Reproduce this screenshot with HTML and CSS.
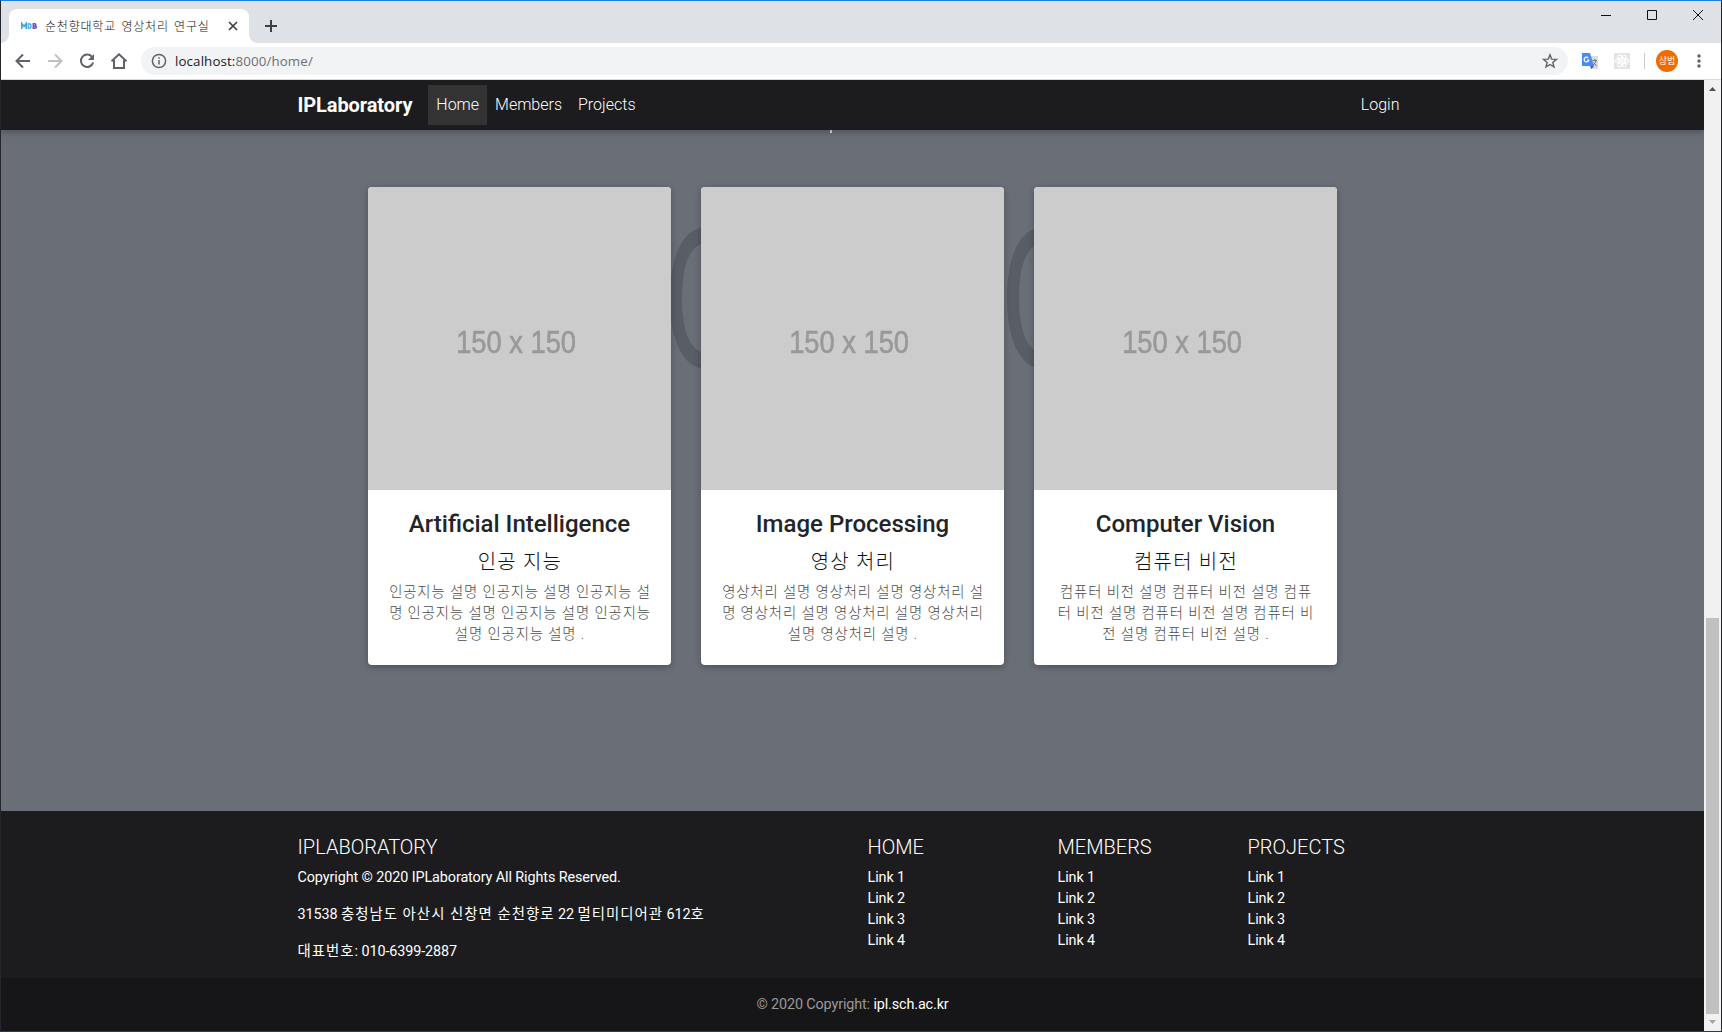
FILE: index.html
```html
<!DOCTYPE html>
<html lang="ko">
<head>
<meta charset="utf-8">
<title>순천향대학교 영상처리 연구실</title>
<link rel="stylesheet" href="styles.css">
</head>
<body>
<div class="window">
  <header class="tabstrip">
    <div class="tab">
      <svg class="favicon" width="16" height="16" viewBox="0 0 16 16" fill="none" stroke-width="1.500">
        <path d="M.8 11V5.500L3 8.500l2.200-3V11" stroke="#35a3da"/>
        <path d="M7.300 5.700h.8q1.900.2 1.900 2.300t-1.900 2.300h-.8z" stroke="#4cb8e8"/>
        <path d="M12.300 5.700h1.400q1.200.1 1.200 1.100t-1.200 1.100h-1.400h1.600q1.400.1 1.400 1.200t-1.400 1.200h-1.600z" stroke="#6a4fc0"/>
      </svg>
      <span class="tab-title">순천향대학교 영상처리 연구실</span>
      <svg class="tab-close" width="10" height="10" viewBox="0 0 10 10" stroke="#3c4043" stroke-width="1.700"><path d="M1 1l8 8M9 1L1 9"/></svg>
    </div>
    <svg class="new-tab" width="12" height="12" viewBox="0 0 12 12" stroke="#3c4043" stroke-width="2"><path d="M6 0v12M0 6h12"/></svg>
    <svg class="window-buttons" width="104" height="12" viewBox="0 0 104 12" fill="none" stroke="#111">
      <path d="M1 6.500h10M47.500 1.500h9v9h-9z"/><path d="M93 1l10 10M103 1L93 11"/>
    </svg>
  </header>
  <div class="toolbar">
    <svg class="nav-icon" width="16" height="16" viewBox="0 0 16 16" fill="none" stroke="#5f6368" stroke-width="2"><path d="M15 8H2M8 1.500L1.500 8 8 14.500"/></svg>
    <svg class="nav-icon" width="16" height="16" viewBox="0 0 16 16" fill="none" stroke="#bdc1c6" stroke-width="2"><path d="M1 8h13M8 1.500L14.500 8 8 14.500"/></svg>
    <svg class="nav-icon" width="16" height="16" viewBox="0 0 16 16" fill="none" stroke="#5f6368" stroke-width="2"><path d="M13.200 4.200A6.200 6.200 0 1 0 14.100 9.500"/><path d="M15 1v6H9z" fill="#5f6368" stroke="none"/></svg>
    <svg class="nav-icon" width="18" height="16" viewBox="0 0 18 16" fill="none" stroke="#5f6368" stroke-width="2"><path d="M1.500 8.300L9 1.300l7.500 7M4 7v8h10V7"/></svg>
    <div class="omnibox">
      <svg width="16" height="16" viewBox="0 0 16 16" fill="none" stroke="#5f6368" stroke-width="1.500"><circle cx="8" cy="8" r="6.600"/><path d="M8 7v4.500M8 4.200v1.600"/></svg>
      <span class="url"><b>localhost:</b>8000/home/</span>
      <svg class="star" width="16" height="16" viewBox="0 0 16 16" fill="none" stroke="#5f6368" stroke-width="1.400"><path d="M8 1.800l1.700 4.300 4.700.3-3.600 3 1.200 4.600-4-2.500L4 14l1.200-4.600-3.600-3 4.700-.3z"/></svg>
    </div>
    <svg class="translate" width="16" height="16" viewBox="0 0 16 16">
      <path d="M6 3h10v13H9z" fill="#dadce0"/><path d="M0 0h8l4 13H0z" fill="#4a8af4"/><path d="M8 13h4l-2.500 3z" fill="#3558c8"/>
      <path d="M6.300 4.900A2.400 2.400 0 1 0 6.900 7H4.800" fill="none" stroke="#fff" stroke-width="1.200"/>
      <path d="M10.500 7.500H15M12.800 6v1.500M14.200 7.500q-.6 3-3.200 4.500M11.500 9.500l3.200 3.500" fill="none" stroke="#607d8b"/>
    </svg>
    <svg class="react" width="16" height="16" viewBox="0 0 16 16" fill="none" stroke="#fff" stroke-width="1.100">
      <path d="M0 0h16v16H0z" fill="#e4e4e4" stroke="none"/><ellipse cx="8" cy="8" rx="6.500" ry="2.600"/><ellipse cx="8" cy="8" rx="6.500" ry="2.600" transform="rotate(60 8 8)"/><ellipse cx="8" cy="8" rx="6.500" ry="2.600" transform="rotate(120 8 8)"/><circle cx="8" cy="8" r="1" fill="#fff"/>
    </svg>
    <span class="separator"></span>
    <span class="avatar">상범</span>
    <svg class="menu" width="4" height="14" viewBox="0 0 4 14" fill="#5f6368"><circle cx="2" cy="2" r="1.700"/><circle cx="2" cy="7" r="1.700"/><circle cx="2" cy="12" r="1.700"/></svg>
  </div>
  <div class="viewport">
    <div class="page">
      <nav class="navbar">
        <div class="container nav-inner">
          <span class="brand">IPLaboratory</span>
          <a class="nav-link active">Home</a>
          <a class="nav-link">Members</a>
          <a class="nav-link">Projects</a>
          <a class="nav-link login">Login</a>
        </div>
      </nav>
      <main class="hero">
        <svg class="backdrop" width="1703" height="681" viewBox="1 130 1703 681" fill="#595d66" fill-rule="evenodd">
          <path d="M670 298C670 254 684 227 707 227S744 254 744 298 730 369 707 369 670 342 670 298M682 298C682 333 691 353 707 353S732 333 732 298 723 243 707 243 682 263 682 298"/>
          <path d="M1007 298C1007 254 1021 227 1044 227S1081 254 1081 298 1067 369 1044 369 1007 342 1007 298M1019 298C1019 333 1028 353 1044 353S1069 333 1069 298 1060 243 1044 243 1019 263 1019 298"/>
          <path d="M830 130h2v3h-2z" fill="#d8dadd"/>
        </svg>
        <article class="card">
          <div class="thumb"><span>150 x 150</span></div>
          <div class="card-body">
            <h4>Artificial Intelligence</h4>
            <h5>인공 지능</h5>
            <p>인공지능 설명 인공지능 설명 인공지능 설<br>명 인공지능 설명 인공지능 설명 인공지능<br>설명 인공지능 설명 .</p>
          </div>
        </article>
        <article class="card">
          <div class="thumb"><span>150 x 150</span></div>
          <div class="card-body">
            <h4>Image Processing</h4>
            <h5>영상 처리</h5>
            <p>영상처리 설명 영상처리 설명 영상처리 설<br>명 영상처리 설명 영상처리 설명 영상처리<br>설명 영상처리 설명 .</p>
          </div>
        </article>
        <article class="card">
          <div class="thumb"><span>150 x 150</span></div>
          <div class="card-body">
            <h4>Computer Vision</h4>
            <h5>컴퓨터 비전</h5>
            <p>컴퓨터 비전 설명 컴퓨터 비전 설명 컴퓨<br>터 비전 설명 컴퓨터 비전 설명 컴퓨터 비<br>전 설명 컴퓨터 비전 설명 .</p>
          </div>
        </article>
      </main>
      <footer class="footer">
        <div class="container footer-grid">
          <section>
            <h5>IPLABORATORY</h5>
            <p>Copyright © 2020 IPLaboratory All Rights Reserved.</p>
            <p class="address">31538 <span class="ko">충청남도 아산시 신창면 순천향로</span> 22 <span class="ko">멀티미디어관</span> 612<span class="ko">호</span></p>
            <p class="phone"><span class="ko">대표번호</span>: 010-6399-2887</p>
          </section>
          <section><h5>HOME</h5><ul><li>Link 1</li><li>Link 2</li><li>Link 3</li><li>Link 4</li></ul></section>
          <section><h5>MEMBERS</h5><ul><li>Link 1</li><li>Link 2</li><li>Link 3</li><li>Link 4</li></ul></section>
          <section><h5>PROJECTS</h5><ul><li>Link 1</li><li>Link 2</li><li>Link 3</li><li>Link 4</li></ul></section>
        </div>
        <div class="copyright">© 2020 Copyright: <a>ipl.sch.ac.kr</a></div>
      </footer>
    </div>
    <div class="scrollbar">
      <svg width="7" height="4" viewBox="0 0 7 4" fill="#505050"><path d="M0 4l3.500-4L7 4z"/></svg>
      <div class="thumb-bar"></div>
      <svg width="7" height="4" viewBox="0 0 7 4" fill="#a3a3a3"><path d="M0 0l3.500 4L7 0z"/></svg>
    </div>
  </div>
</div>
</body>
</html>
```
FILE: styles.css
```css
* { box-sizing: border-box; }
body { margin: 0; font-family: Roboto, "Noto Sans CJK KR", sans-serif; }
h4, h5, p, ul { margin: 0; padding: 0; }
ul { list-style: none; }
svg { display: block; flex: none; }

.window {
  width: 1722px; height: 1032px; overflow: hidden;
  display: flex; flex-direction: column;
  border: 1px solid #25262b; border-top-color: #1a80d9; border-bottom-color: #1d4258;
}

/* Browser chrome */
.tabstrip { height: 42px; flex: none; display: flex; background: #dee1e6; padding-left: 8px; }
.tab {
  position: relative; width: 240px; height: 34px; margin-top: 8px; padding: 0 11px 0 12px;
  display: flex; align-items: center; background: #fff; border-radius: 8px 8px 0 0;
}
.tab::before, .tab::after { content: ""; position: absolute; bottom: 0; width: 8px; height: 8px; }
.tab::before { left: -8px; background: radial-gradient(circle at 0 0, transparent 7.5px, #fff 8px); }
.tab::after { right: -8px; background: radial-gradient(circle at 100% 0, transparent 7.5px, #fff 8px); }
.tab-title {
  margin: -1px 0 0 8px; font: 12px/16px "Noto Sans CJK KR", sans-serif; font-weight: 300;
  letter-spacing: .8px; word-spacing: 1.2px; color: #111; white-space: nowrap;
}
.tab-close { margin-left: auto; }
.new-tab { margin: 19px 0 0 16px; }
.window-buttons { margin: 8px 17px 0 auto; }

.toolbar { height: 37px; flex: none; display: flex; align-items: center; background: #fff; border-bottom: 1px solid #d6d8db; padding-left: 14px; }
.nav-icon { margin-right: 16px; }
.nav-icon:nth-child(4) { margin-right: 13px; margin-left: -1px; }
.omnibox { width: 1427px; height: 28px; flex: none; display: flex; align-items: center; padding: 0 10px; background: #f1f3f4; border-radius: 14px; }
.url { margin-left: 8px; font: 13.3px/20px "Open Sans", sans-serif; letter-spacing: .13px; color: #6b7075; }
.url b { font-weight: 400; color: #202124; }
.star { margin-left: auto; }
.translate { margin-left: 14px; }
.react { margin-left: 16px; }
.separator { width: 1px; height: 16px; margin: 0 11px 0 14px; background: #c8cacd; }
.avatar { width: 22px; height: 22px; border-radius: 50%; background: #ef6c00; color: #fff; font: 9px/22px "Noto Sans CJK KR", sans-serif; text-align: center; }
.menu { margin-left: 19px; }

.viewport { flex: 1; display: flex; min-height: 0; }
.page { width: 1703px; display: flex; flex-direction: column; overflow: hidden; }
.scrollbar { width: 17px; background: #f1f1f1; display: flex; flex-direction: column; align-items: center; justify-content: space-between; padding: 7px 0; }
.thumb-bar { width: 13px; height: 396px; margin: auto 0 6px; background: #c1c1c1; }

/* Site */
.container { width: 1110px; margin: 0 auto; }
.navbar { position: relative; z-index: 1; height: 50px; flex: none; background: #1c1c1e; box-shadow: 0 2px 5px rgba(0,0,0,.16), 0 2px 10px rgba(0,0,0,.12); }
.nav-inner { display: flex; align-items: center; height: 50px; color: #fff; }
.brand { font-size: 20px; line-height: 30px; font-weight: 700; width: 130.8px; letter-spacing: -.08px; }
.nav-link { font-size: 16px; font-weight: 300; line-height: 24px; padding: 8px; height: 40px; }
.active { background: rgba(255,255,255,.1); }
.login { margin-left: auto; }

.hero { position: relative; height: 681px; flex: none; display: flex; justify-content: center; align-items: flex-start; gap: 30px; padding-top: 57px; background: #6a6e77; }
.backdrop { position: absolute; left: 0; top: 0; }
.card { position: relative; width: 303px; height: 478px; background: #fff; border-radius: 4px; overflow: hidden; box-shadow: 0 2px 5px rgba(0,0,0,.16), 0 2px 10px rgba(0,0,0,.12); }
.thumb { height: 303px; display: flex; align-items: center; justify-content: center; background: #ccc; color: #999; font: 31px/40px "Liberation Sans", sans-serif; padding: 8px 6px 0 0; }
.thumb span { filter: blur(.6px); transform: scaleX(.88); white-space: nowrap; -webkit-text-stroke: .6px #999; }
.card-body { padding-top: 20px; text-align: center; white-space: nowrap; color: #212529; }
.card-body h4 { font-size: 24px; line-height: 28.8px; font-weight: 500; margin-bottom: 11px; }
.card-body h5 { font-size: 20px; line-height: 24px; font-weight: 300; margin-bottom: 8px; padding-left: 1px; letter-spacing: 1.2px; color: #111; }
.card-body p { font-size: 14.4px; line-height: 21px; font-weight: 300; padding-left: 1px; color: #4c4c4c; letter-spacing: .87px; }

.footer { height: 220px; flex: none; background: #1c1c1e; color: #fff; }
.footer-grid { height: 167px; display: grid; grid-template-columns: 570px 190px 190px 160px; padding-top: 24px; font-size: 14.4px; line-height: 21px; letter-spacing: -.1px; }
.footer h5 { font-size: 20px; line-height: 24px; font-weight: 300; margin-bottom: 8px; letter-spacing: 0; }
.ko { letter-spacing: 1.03px; }
.address, .phone { margin-top: 16px; }
.copyright { height: 53px; background: #161618; text-align: center; font-size: 14.4px; line-height: 54px; letter-spacing: -.13px; color: #999; }
.copyright a { color: #fff; }
```
